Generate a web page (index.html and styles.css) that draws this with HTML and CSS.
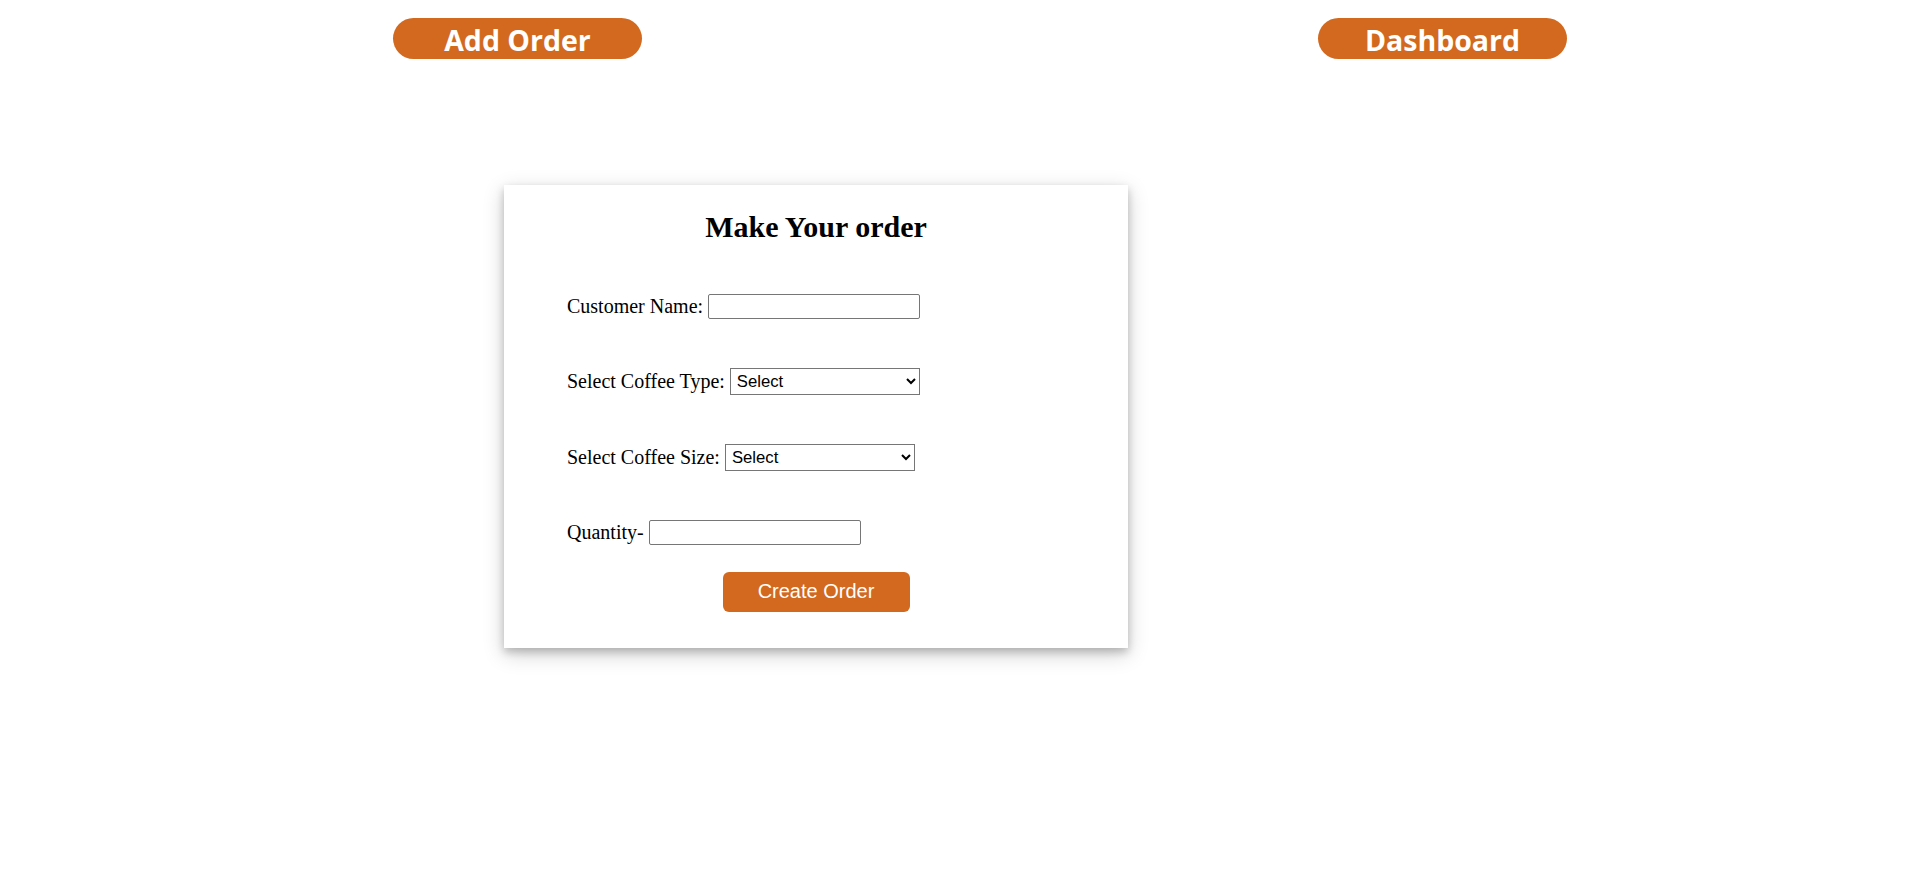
FILE: index.html
```html
<!DOCTYPE html>
<html lang="en">
<head>
<meta charset="utf-8">
<title>Make Your order</title>
<link rel="stylesheet" href="styles.css">
</head>
<body>
<nav class="topnav">
  <a class="nav-btn" href="#">Add Order</a>
  <a class="nav-btn" href="#">Dashboard</a>
</nav>
<main class="card">
  <h2 class="card-title">Make Your order</h2>
  <form class="order-form">
    <div class="row">
      <label class="lbl">Customer Name:</label>
      <input class="field text-field" type="text">
    </div>
    <div class="row">
      <label class="lbl">Select Coffee Type:</label>
      <select class="field select-field"><option>Select</option></select>
    </div>
    <div class="row">
      <label class="lbl">Select Coffee Size:</label>
      <select class="field select-field"><option>Select</option></select>
    </div>
    <div class="row">
      <label class="lbl">Quantity-</label>
      <input class="field text-field" type="text">
    </div>
    <button class="submit-btn" type="button">Create Order</button>
  </form>
</main>
</body>
</html>
```
FILE: styles.css
```css
html, body {
  margin: 0;
  padding: 0;
  background: #ffffff;
}

body {
  min-height: 100vh;
  font-family: "Liberation Serif", "Times New Roman", serif;
  color: #000;
}

.topnav {
  display: flex;
  justify-content: space-between;
  padding: 18px 340px 0 393px;
}

.nav-btn {
  display: block;
  box-sizing: border-box;
  width: 249px;
  height: 41px;
  padding-top: 4px;
  line-height: 37px;
  border-radius: 21px;
  background: #d2691e;
  color: #ffffff;
  text-decoration: none;
  text-align: center;
  font-family: "Open Sans", "Noto Sans", sans-serif;
  font-weight: 700;
  font-size: 28.5px;
}

.card {
  box-sizing: border-box;
  width: 624px;
  height: 463px;
  margin: 126px 0 0 504px;
  padding: 25px 0 0 63px;
  background: #ffffff;
  box-shadow: 0 4px 8px 0 rgba(0, 0, 0, 0.2), 0 6px 20px 0 rgba(0, 0, 0, 0.19);
}

.card-title {
  margin: 0 0 0 -63px;
  font-size: 30px;
  font-weight: bold;
  text-align: center;
  line-height: normal;
}

.order-form {
  display: flex;
  flex-direction: column;
  gap: 35.5px;
  margin-top: 42px;
}

.row {
  display: flex;
  align-items: center;
  gap: 5px;
  height: 40px;
}

.lbl {
  font-size: 20px;
  line-height: 23px;
}

.field {
  box-sizing: border-box;
  margin: 0;
  font-family: "Liberation Sans", Arial, sans-serif;
  font-size: 16.7px;
  color: #000;
  background: #fff;
  border: 1px solid #767676;
}

.text-field {
  width: 212px;
  height: 25px;
  border-radius: 2px;
  padding: 1px 2px;
}

.select-field {
  width: 190px;
  height: 27px;
  border-radius: 0;
  padding: 0 2px;
}

.submit-btn {
  align-self: center;
  margin: -16.5px 0 0 -63px;
  width: 187px;
  height: 40px;
  border: none;
  border-radius: 6px;
  background: #d2691e;
  color: #ffffff;
  font-family: "Liberation Sans", Arial, sans-serif;
  font-size: 20px;
  cursor: pointer;
}
```
